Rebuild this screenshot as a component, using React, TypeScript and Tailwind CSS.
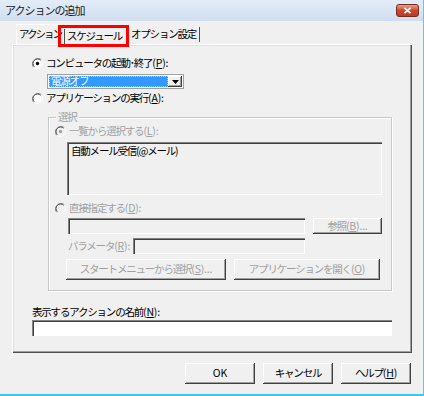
import React from 'react'

const font = { fontFamily: '"Noto Sans CJK JP", "Liberation Sans", sans-serif' }

function Radio({ checked, disabled }: { checked?: boolean; disabled?: boolean }) {
  const dot = disabled ? '#a0a0a0' : '#000'
  return (
    <svg width="11" height="11" viewBox="0 0 12 12" className="shrink-0">
      <path d="M10.2 1.8 A6 6 0 0 0 1.8 10.2" stroke="#808080" strokeWidth="1" fill="none" />
      <path d="M9.4 2.6 A4.8 4.8 0 0 0 2.6 9.4" stroke="#404040" strokeWidth="1" fill="none" />
      <path d="M1.8 10.2 A6 6 0 0 0 10.2 1.8" stroke="#fff" strokeWidth="1" fill="none" />
      <circle cx="6" cy="6" r="4" fill={disabled ? '#f0f0f0' : '#fff'} />
      {checked && <circle cx="6" cy="6" r="1.8" fill={dot} />}
    </svg>
  )
}

// mnemonic like (P):  — latin part keeps normal spacing
function Key({ k, colon, dots }: { k: string; colon?: boolean; dots?: boolean }) {
  return (
    <span className="tracking-[-0.2px]">
      (<u>{k}</u>){colon ? ':' : ''}{dots ? '...' : ''}
    </span>
  )
}

const raised =
  'bg-[#f0f0f0] shadow-[inset_-1px_-1px_0_#404040,inset_1px_1px_0_#ffffff,inset_-2px_-2px_0_#a0a0a0]'
const sunken = 'shadow-[inset_1px_1px_0_#808080,inset_2px_2px_0_#404040,inset_-1px_-1px_0_#ffffff]'

export default function App() {
  return (
    <div
      className="w-[424px] h-[396px] bg-[#f0f0f0] text-[10.5px] tracking-[-1.2px] whitespace-nowrap leading-none text-black flex flex-col border-r border-[#6fc3e8] border-b-2 border-b-[#3cc3f0] overflow-hidden"
      style={font}
    >
      {/* Title bar */}
      <div className="h-[21px] shrink-0 flex items-center justify-between pl-[5px] pr-[4px] bg-gradient-to-b from-[#e3edf8] to-[#cfdef0]">
        <span className="text-[11px] tracking-[-1px] text-[#1a1a1a]">アクションの追加</span>
        <div className="w-[23px] h-[13px] rounded-[3px] border border-[#7a2a1e] bg-gradient-to-b from-[#e8a090] via-[#c8482e] to-[#c03a20] flex items-center justify-center">
          <svg width="9" height="7" viewBox="0 0 9 8">
            <path d="M1 1 L8 7 M8 1 L1 7" stroke="#fff" strokeWidth="2" />
          </svg>
        </div>
      </div>

      <div className="flex-1 px-[12px] flex flex-col">
        {/* Tabs */}
        <div className="h-[23px] flex items-end pl-[4px]">
          <div className="w-[44px] h-[20px] flex items-center pl-[2px] tracking-[-2px] border-t border-l border-white">
            アクション
          </div>
          <div className="w-[67px] h-[18px] flex items-center outline-[3px] outline-[#ff0000] -outline-offset-[1px] pl-[4px] relative top-[1px]">
            <span className="border-l border-[#505050] pl-[2px] h-[15px] flex items-center">スケジュール</span>
          </div>
          <div className="h-[20px] flex items-center pl-[4px]">
            <span className="pr-[3px]">オプション設定</span>
            <span className="w-px h-[15px] bg-[#505050]" />
          </div>
        </div>

        {/* Tab panel */}
        <div className="h-[309px] w-[400px] border-l border-t border-white shadow-[inset_-1px_-1px_0_#505050,inset_-2px_-2px_0_#a0a0a0,inset_1px_1px_0_#e0e0e0] flex flex-col pl-[19px] pr-[20px] pt-[11px]">
          <div className="flex items-center gap-[3px] h-[14px]">
            <Radio checked />
            <span>コンピュータの起動･終了<Key k="P" colon /></span>
          </div>
          <div className="ml-[15px] mt-[4px] w-[137px] h-[15px] bg-white flex items-center p-[1px] border border-[#a0a0a0]">
            <div className="flex-1 h-full bg-[#3399ff] text-white flex items-center pl-[2px] outline outline-dotted outline-[#ffd000] -outline-offset-1">
              電源オフ
            </div>
            <div className={`w-[14px] h-full flex items-center justify-center ${raised}`}>
              <svg width="7" height="4" viewBox="0 0 7 4">
                <path d="M0 0 H7 L3.5 4 Z" fill="#000" />
              </svg>
            </div>
          </div>
          <div className="flex items-center gap-[3px] h-[14px] mt-[2px]">
            <Radio />
            <span>アプリケーションの実行<Key k="A" colon /></span>
          </div>

          {/* Group box */}
          <div className="relative ml-[16px] mt-[12px] w-[344px] h-[174px] border border-[#c8c8c8] shadow-[inset_1px_1px_0_#fff,1px_1px_0_#fff] pt-[6px] pl-[6px] text-[#a0a0a0]">
            <span className="absolute -top-[6px] left-[7px] bg-[#f0f0f0] px-[2px]">選択</span>
            <div className="flex items-center gap-[3px] h-[14px]">
              <Radio checked disabled />
              <span>一覧から選択する<Key k="L" colon /></span>
            </div>
            <div className={`ml-[12px] mt-[4px] w-[315px] h-[53px] bg-[#f0f0f0] ${sunken} pl-[4px] pt-[4px] text-black`}>
              自動メール受信(@メール)
            </div>
            <div className="flex items-center gap-[3px] h-[14px] mt-[6px]">
              <Radio disabled />
              <span>直接指定する<Key k="D" colon /></span>
            </div>
            <div className="flex items-center mt-[3px] ml-[13px]">
              <div className={`w-[237px] h-[16px] ${sunken}`} />
              <div className={`ml-[8px] w-[69px] h-[16px] ${raised} flex items-center justify-center`}>
                参照<Key k="B" dots />
              </div>
            </div>
            <div className="flex items-center mt-[4px] ml-[13px]">
              <span className="w-[65px]">パラメータ<Key k="R" colon /></span>
              <div className={`w-[172px] h-[16px] ${sunken}`} />
            </div>
            <div className="flex items-center mt-[5px] ml-[11px] gap-[8px]">
              <div className={`w-[160px] h-[21px] ${raised} flex items-center justify-center`}>
                スタートメニューから選択<Key k="S" dots />
              </div>
              <div className={`w-[146px] h-[21px] ${raised} flex items-center justify-center`}>
                アプリケーションを開く<Key k="O" />
              </div>
            </div>
          </div>

          <div className="mt-[15px] h-[12px] flex items-center">
            表示するアクションの名前<Key k="N" colon />
          </div>
          <div className={`mt-[2px] w-[360px] h-[16px] bg-white ${sunken}`} />
        </div>

        {/* Dialog buttons */}
        <div className="flex justify-end gap-[8px] mt-[10px]">
          <div className={`w-[70px] h-[21px] ${raised} flex items-center justify-center tracking-normal`}>OK</div>
          <div className={`w-[70px] h-[21px] ${raised} flex items-center justify-center`}>キャンセル</div>
          <div className={`w-[70px] h-[21px] ${raised} flex items-center justify-center`}>
            ヘルプ<Key k="H" />
          </div>
        </div>
      </div>
    </div>
  )
}
